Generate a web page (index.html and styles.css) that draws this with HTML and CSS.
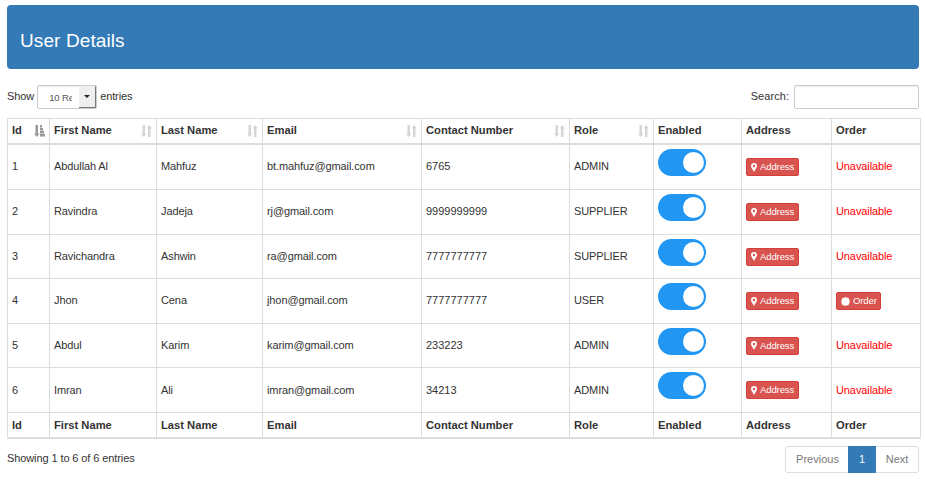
FILE: index.html
```html
<!DOCTYPE html>
<html lang="en">
<head>
<meta charset="utf-8">
<title>User Details</title>
<link rel="stylesheet" href="styles.css">
</head>
<body>
<svg class="defs" width="0" height="0">
  <symbol id="sort" viewBox="0 0 11 12"><path d="M1.500 0h2.500v8.500h1.500L2.750 12 0 8.500h1.500zM7 12h2.500V3.500H11L8.250 0 5.500 3.500H7z"/></symbol>
  <symbol id="sorted" viewBox="0 0 11 12"><path d="M1.500 0H4v8.500h1.500L2.750 12 0 8.500h1.500zM6 0h2v2.400H6zM6 3h3v2.400H6zM6 6h4v2.400H6zM6 9h5v2.500H6z"/></symbol>
  <symbol id="pin" viewBox="0 0 6 9"><path fill-rule="evenodd" d="M3 0a3 3 0 0 1 3 3C6 4.700 4.200 6.400 3 9 1.800 6.400 0 4.700 0 3a3 3 0 0 1 3-3zm0 1.800a1.200 1.200 0 1 0 0 2.400 1.200 1.200 0 0 0 0-2.400z"/></symbol>
  <symbol id="cert" viewBox="0 0 10 10"><path d="M5 0l1.500.9H8.300l.5 1.600.9 1-.3 1.500.3 1.500-.9 1-.5 1.600H6.500L5 10l-1.500-.9H1.700l-.5-1.600-.9-1L.6 5 .3 3.500l.9-1L1.700.9h1.800z"/></symbol>
</svg>
<header class="banner"><h1>User Details</h1></header>
<div class="toolbar">
  <div class="length"><span class="label">Show</span> <span class="select"><span class="value">10 Records</span><span class="arrow"></span></span> <span class="label">entries</span></div>
  <label class="search"><span class="label">Search:</span> <input type="text"></label>
</div>
<table>
  <colgroup><col class="c-id"><col class="c-first"><col class="c-last"><col class="c-email"><col class="c-phone"><col class="c-role"><col class="c-enabled"><col class="c-address"><col class="c-order"></colgroup>
  <thead><tr>
    <th><div>Id<svg class="sort active"><use href="#sorted"/></svg></div></th>
    <th><div>First Name<svg class="sort"><use href="#sort"/></svg></div></th>
    <th><div>Last Name<svg class="sort"><use href="#sort"/></svg></div></th>
    <th><div>Email<svg class="sort"><use href="#sort"/></svg></div></th>
    <th><div>Contact Number<svg class="sort"><use href="#sort"/></svg></div></th>
    <th><div>Role<svg class="sort"><use href="#sort"/></svg></div></th>
    <th><div>Enabled</div></th><th><div>Address</div></th><th><div>Order</div></th>
  </tr></thead>
  <tbody>
    <tr><td>1</td><td>Abdullah Al</td><td>Mahfuz</td><td>bt.mahfuz@gmail.com</td><td class="phone">6765</td><td>ADMIN</td><td><span class="switch"></span></td><td><a class="btn"><svg class="pin"><use href="#pin"/></svg>Address</a></td><td class="none">Unavailable</td></tr>
    <tr><td>2</td><td>Ravindra</td><td>Jadeja</td><td>rj@gmail.com</td><td class="phone">9999999999</td><td>SUPPLIER</td><td><span class="switch"></span></td><td><a class="btn"><svg class="pin"><use href="#pin"/></svg>Address</a></td><td class="none">Unavailable</td></tr>
    <tr class="short"><td>3</td><td>Ravichandra</td><td>Ashwin</td><td>ra@gmail.com</td><td class="phone">7777777777</td><td>SUPPLIER</td><td><span class="switch"></span></td><td><a class="btn"><svg class="pin"><use href="#pin"/></svg>Address</a></td><td class="none">Unavailable</td></tr>
    <tr><td>4</td><td>Jhon</td><td>Cena</td><td>jhon@gmail.com</td><td class="phone">7777777777</td><td>USER</td><td><span class="switch"></span></td><td><a class="btn"><svg class="pin"><use href="#pin"/></svg>Address</a></td><td><a class="btn order"><svg class="cert"><use href="#cert"/></svg>Order</a></td></tr>
    <tr class="short"><td>5</td><td>Abdul</td><td>Karim</td><td>karim@gmail.com</td><td class="phone">233223</td><td>ADMIN</td><td><span class="switch"></span></td><td><a class="btn"><svg class="pin"><use href="#pin"/></svg>Address</a></td><td class="none">Unavailable</td></tr>
    <tr class="last"><td>6</td><td>Imran</td><td>Ali</td><td>imran@gmail.com</td><td class="phone">34213</td><td>ADMIN</td><td><span class="switch"></span></td><td><a class="btn"><svg class="pin"><use href="#pin"/></svg>Address</a></td><td class="none">Unavailable</td></tr>
  </tbody>
  <tfoot><tr>
    <th>Id</th><th>First Name</th><th>Last Name</th><th>Email</th><th>Contact Number</th><th>Role</th><th>Enabled</th><th>Address</th><th>Order</th>
  </tr></tfoot>
</table>
<footer class="bottom">
  <div class="info">Showing 1 to 6 of 6 entries</div>
  <nav class="pages"><a>Previous</a><a class="current">1</a><a>Next</a></nav>
</footer>
</body>
</html>
```
FILE: styles.css
```css
* { box-sizing: border-box; }
body { margin: 0; padding: 5px 4px 0 7px; height: 487px; overflow: hidden; background: #fff; color: #333; font: 11px/16px "Liberation Sans", Arial, sans-serif; letter-spacing: -.1px; }
.defs { display: block; height: 0; }
svg { fill: currentColor; }
.banner { width: 912px; height: 64px; padding: 0 13px; display: flex; align-items: center; background: #337ab7; border-radius: 4px; }
.banner h1 { margin: 7px 0 0; font-size: 19px; line-height: 22px; font-weight: 400; color: #fff; letter-spacing: .1px; }
.toolbar { width: 912px; height: 24px; margin-top: 16px; display: flex; justify-content: space-between; line-height: 14px; }
.length, .search { display: flex; align-items: center; }
.length { gap: 3px; }
.search { gap: 5px; letter-spacing: .05px; }
.label { padding-bottom: 2px; }
.search input { width: 125px; height: 24px; border: 1px solid #ccc; border-radius: 2px; box-shadow: inset 0 1px 1px rgba(0,0,0,.075); }
.select { width: 60px; height: 24px; display: flex; border: 1px solid #ccc; border-radius: 2px; overflow: hidden; box-shadow: inset 0 1px 1px rgba(0,0,0,.075); }
.select .value { width: 23px; margin-left: 11px; overflow: hidden; white-space: nowrap; color: #555; font-size: 9.5px; line-height: 24px; }
.select .arrow { width: 17px; margin-left: auto; display: flex; align-items: center; justify-content: center; background: #efefef; border-right: 1px solid #777; border-bottom: 1px solid #777; }
.select .arrow::after { content: ""; border: 3px solid transparent; border-top-color: #222; border-bottom: 0; }
table { table-layout: fixed; width: 914px; margin-top: 9px; border-collapse: separate; border-spacing: 0; border: 1px solid #ddd; border-width: 1px 0 0 1px; }
.c-id { width: 42px; }
.c-first { width: 107px; }
.c-last { width: 106px; }
.c-email { width: 159px; }
.c-phone { width: 148px; }
.c-role { width: 84px; }
.c-enabled { width: 88px; }
.c-address { width: 90px; }
.c-order { width: 89px; }
th, td { padding: 0 4px; text-align: left; vertical-align: middle; white-space: nowrap; border: 1px solid #ddd; border-width: 0 1px 1px 0; }
th { height: 26px; border-bottom-width: 2px; font-size: 11.2px; letter-spacing: 0; }
thead th div { display: flex; height: 16px; margin-top: -2px; line-height: 16px; justify-content: space-between; }
td { height: 45px; padding-bottom: 1px; }
td:nth-child(-n+6), .none { padding-bottom: 3px; }
.short td { height: 44px; padding-bottom: 1px; }
.last td { padding-bottom: 1px; }
.phone { letter-spacing: 0; }
.sort { width: 11px; height: 12px; margin-top: 3px; color: #d6d6d6; }
.sort.active { color: #999; }
.none { color: red; }
.switch { display: block; width: 48px; height: 27px; margin-top: -8px; padding: 3px 2px 3px 25px; border-radius: 14px; background: #2196f3; }
.switch::after { content: ""; display: block; width: 21px; height: 21px; border-radius: 50%; background: #fff; }
.btn { display: flex; align-items: center; width: 53px; height: 18px; margin-top: 1px; padding: 0 4px; gap: 3px; color: #fff; background: #d9534f; border: 1px solid #d43f3a; border-radius: 2px; font-size: 9.5px; line-height: 16px; }
.btn.order { width: 45px; }
.pin { width: 6px; height: 9px; flex: none; }
.cert { width: 9px; height: 9px; flex: none; }
.bottom { width: 912px; margin-top: 7px; display: flex; justify-content: space-between; }
.info { margin-top: 4px; letter-spacing: -.1px; }
.pages { display: flex; height: 27px; width: 134px; border: 1px solid #ddd; border-radius: 3px; color: #777; line-height: 25px; text-align: center; letter-spacing: 0; }
.pages a { flex: 1; }
.pages a:first-child { flex: none; width: 62px; padding-left: 1px; }
.pages .current { flex: none; width: 28px; margin: -1px 0; padding-top: 1px; background: #337ab7; color: #fff; }
```
